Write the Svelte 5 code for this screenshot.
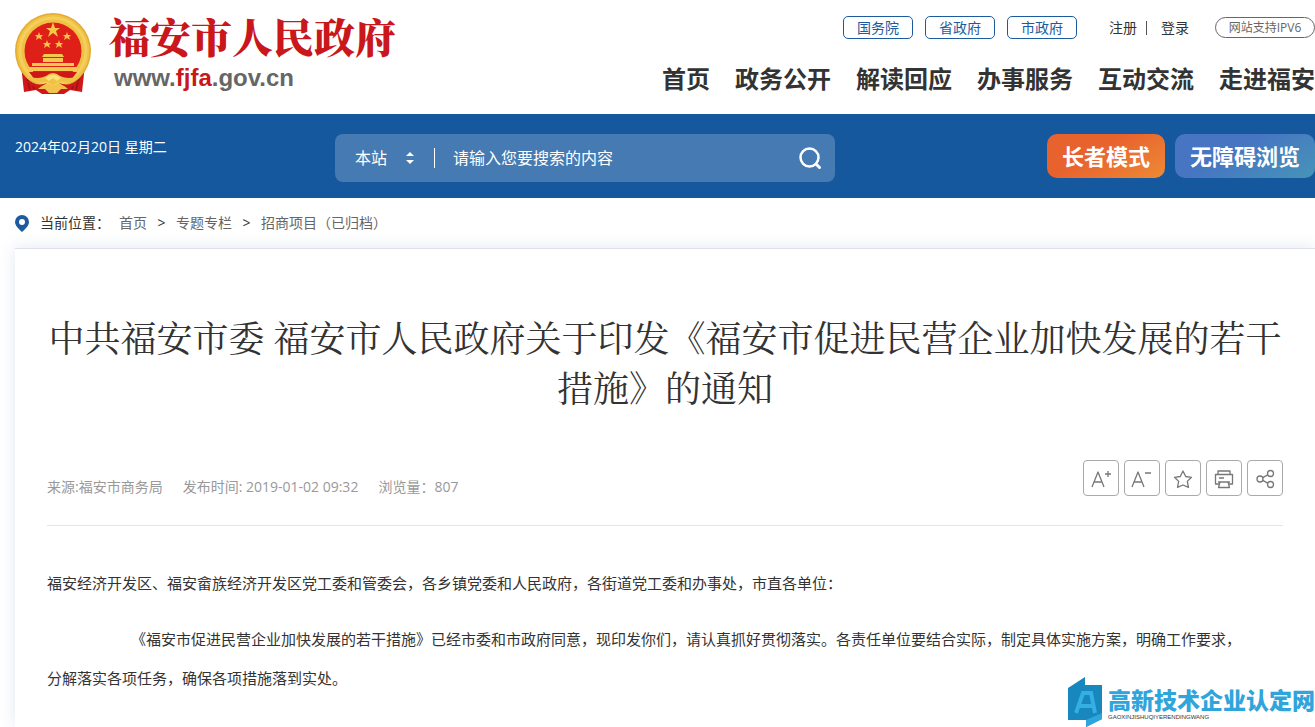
<script lang="ts">
  const portals = ['国务院', '省政府', '市政府'];
  const nav = ['首页', '政务公开', '解读回应', '办事服务', '互动交流', '走进福安'];
  const crumbs = ['首页', '专题专栏', '招商项目（已归档）'];

  let scope = '本站';
  let keyword = '';
</script>

<div class="page">
  <header>
    <a class="brand" href="#home">
      <svg class="emblem" viewBox="0 0 78 82" aria-hidden="true">
        <path d="M7 52 L71 52 L68 79 L56 77 L50 81 L28 81 L22 77 L10 79 Z" fill="#cf1719" />
        <path d="M12 61 L16 77 M66 61 L62 77 M17 66 L20 76 M61 66 L58 76" stroke="#9c1115" stroke-width="1.500" />
        <circle cx="39" cy="38" r="38" fill="#e2ab35" />
        <circle cx="39" cy="38" r="36.500" fill="#efc244" />
        <circle cx="39" cy="38" r="33" fill="none" stroke="#f5cf5c" stroke-width="3" />
        <circle cx="39" cy="38" r="28.500" fill="#df2018" />
        <path d="M39 9 L41 15 L46 15 L42 18 L44 24 L39 20 L34 24 L36 18 L32 15 L37 15 Z" fill="#f5c748" />
        <g fill="#f5c748">
          {#each [[25, 23], [53, 23], [33, 31], [45, 31]] as [x, y]}
            <path transform="translate({x} {y})" d="M0 -4 L1 -1 L4 -1 L2 1 L3 4 L0 2 L-3 4 L-2 1 L-4 -1 L-1 -1 Z" />
          {/each}
        </g>
        <path d="M30 41 H48 L50 44 H28 Z M29 45 H49 V49 H29 Z M18 50 H60 V53 H18 Z M15 54 H63 V58 H15 Z" fill="#f5c94f" />
        <path d="M15 59 H63 L57 67 H21 Z" fill="#cf1719" />
        <path d="M8 58 Q20 69 32 63 Q39 57 46 63 Q58 69 70 58 L64 66 Q55 72 46 68 L39 72 L32 68 Q23 72 14 66 Z" fill="#efc244" />
        <path d="M31 65 Q39 58 47 65 L43 68 L39 65 L35 68 Z" fill="#fae17b" />
        <path d="M12 67 Q24 74 33 70 L26 75 Q18 75 12 67 Z M66 67 Q54 74 45 70 L52 75 Q60 75 66 67 Z" fill="#cf1719" />
        <path d="M24 76 Q33 68 39 73 Q45 68 54 76 L47 76 L43 80 H35 L31 76 Z" fill="#f2c44b" />
      </svg>
      <span class="names">
        <strong>福安市人民政府</strong>
        <span class="domain">www.<em>fjfa</em>.gov.cn</span>
      </span>
    </a>

    <div class="head-right">
      <div class="quick">
        {#each portals as portal}
          <a class="portal" href="#portal">{portal}</a>
        {/each}
        <div class="account">
          <a href="#register">注册</a>
          <a href="#login">登录</a>
        </div>
        <span class="ipv6">网站支持IPV6</span>
      </div>
      <nav>
        {#each nav as item}
          <a href="#nav">{item}</a>
        {/each}
      </nav>
    </div>
  </header>

  <div class="banner">
    <time datetime="2024-02-20">2024年02月20日 星期二</time>
    <form class="search" onsubmit={(e) => e.preventDefault()}>
      <div class="scope">
        <select aria-label="搜索范围" bind:value={scope}>
          <option>本站</option>
          <option>全网</option>
        </select>
        <svg width="10" height="14" viewBox="0 0 10 14" aria-hidden="true">
          <path d="M5 1 L9 5 H1 Z M1 9 H9 L5 13 Z" fill="#fff" />
        </svg>
      </div>
      <input type="text" aria-label="搜索" placeholder="请输入您要搜索的内容" bind:value={keyword} />
      <button aria-label="搜索">
        <svg width="24" height="24" viewBox="0 0 24 24" fill="none" stroke="#fff" stroke-width="2.500" stroke-linecap="round">
          <circle cx="11.500" cy="11.500" r="9" />
          <path d="M18.500 18.500 L21.500 21.500" stroke-width="3" />
        </svg>
      </button>
    </form>
    <div class="modes">
      <button class="elder">长者模式</button>
      <button class="barrier">无障碍浏览</button>
    </div>
  </div>

  <div class="crumbs">
    <svg width="14" height="17" viewBox="0 0 14 17" aria-hidden="true">
      <path d="M7 0 A7 7 0 0 1 14 7 C14 11 9 15 7 17 C5 15 0 11 0 7 A7 7 0 0 1 7 0 Z M7 4 A3 3 0 0 0 7 10 A3 3 0 0 0 7 4 Z" fill="#1c5b9f" />
    </svg>
    <span class="here">当前位置：</span>
    {#each crumbs as crumb, i}
      {#if i > 0}<span class="sep">&gt;</span>{/if}
      <a href="#crumb">{crumb}</a>
    {/each}
  </div>

  <article>
    <h1>中共福安市委 福安市人民政府关于印发《福安市促进民营企业加快发展的若干措施》的通知</h1>

    <div class="info">
      <div class="meta">
        <span>来源:福安市商务局</span>
        <span>发布时间: 2019-01-02 09:32</span>
        <span>浏览量：807</span>
      </div>
      <div class="tools">
        <button aria-label="放大字体">
          <svg viewBox="0 0 36 36"><path d="M9 27 L15 12 L21 27 M11 22 H19 M22 14 H28 M25 11 V17" /></svg>
        </button>
        <button aria-label="缩小字体">
          <svg viewBox="0 0 36 36"><path d="M8 27 L14 12 L20 27 M10 22 H18 M21 13 H27" /></svg>
        </button>
        <button aria-label="收藏">
          <svg viewBox="0 0 36 36"><path d="M18 11 L20.700 16.500 L26.500 17.300 L22.300 21.400 L23.500 27.300 L18 25 L12.500 27.300 L13.700 21.400 L9.500 17.300 L15.300 16.500 Z" /></svg>
        </button>
        <button aria-label="打印">
          <svg viewBox="0 0 36 36"><path d="M12 14 V11 H24 V14 M13 24 H9.500 V14.500 H26.500 V24 H23 M13 18 H18 M12 22 H24 M14 22 L12.500 27.500 H23.500 L22 22" /></svg>
        </button>
        <button aria-label="分享">
          <svg viewBox="0 0 36 36"><circle cx="13" cy="19" r="3" /><circle cx="23.500" cy="13.500" r="3" /><circle cx="23.500" cy="24.500" r="3" /><path d="M15.700 17.600 L20.800 14.900 M15.700 20.400 L20.800 23.100" /></svg>
        </button>
      </div>
    </div>

    <div class="content">
      <p>福安经济开发区、福安畲族经济开发区党工委和管委会，各乡镇党委和人民政府，各街道党工委和办事处，市直各单位：</p>
      <p class="indent">《福安市促进民营企业加快发展的若干措施》已经市委和市政府同意，现印发你们，请认真抓好贯彻落实。各责任单位要结合实际，制定具体实施方案，明确工作要求，<br />分解落实各项任务，确保各项措施落到实处。</p>
    </div>
  </article>

  <a class="mark" href="#mark">
    <svg width="36" height="50" viewBox="0 0 36 50" aria-hidden="true">
      <path d="M0 11 L17 0 V8 H34 V42 L18 50 V43 H0 Z" fill="#1787bd" />
      <path d="M18 43 L34 36 V42 L18 50 Z" fill="#2fa5dc" />
      <path d="M8 36 L15 16 H23 L27 36 M12 29 H25" fill="none" stroke="#35aee2" stroke-width="4" />
    </svg>
    <span class="mark-text">
      <b>高新技术企业认定网</b>
      <small>GAOXINJISHUQIYERENDINGWANG</small>
    </span>
  </a>
</div>

<style>
  :global(body) {
    margin: 0;
  }

  .page {
    position: relative;
    display: flex;
    flex-direction: column;
    min-height: 100vh;
    overflow: hidden;
    background: #fff;
    color: #333;
    font-family: "Open Sans", "Noto Sans CJK SC", sans-serif;
    font-size: 14px;
    line-height: 20px;
  }

  .page * {
    box-sizing: border-box;
  }

  a {
    color: inherit;
    text-decoration: none;
  }

  button,
  input,
  select {
    padding: 0;
    border: 0;
    background: none;
    color: inherit;
    font: inherit;
  }

  header {
    display: flex;
    justify-content: space-between;
    height: 114px;
    padding-left: 14px;
  }

  .brand {
    display: flex;
    gap: 17px;
    padding-top: 13px;
  }

  .emblem {
    width: 78px;
    height: 82px;
  }

  .names {
    display: flex;
    flex-direction: column;
    white-space: nowrap;
  }

  .names strong {
    color: #c9171b;
    font-family: "Liberation Serif", "Noto Serif CJK SC", "Noto Sans CJK SC", serif;
    font-size: 41px;
    font-weight: 900;
    line-height: 52px;
  }

  .domain {
    padding-left: 5px;
    color: #666;
    font-family: "Liberation Sans", sans-serif;
    font-size: 24px;
    font-weight: 700;
    line-height: 26px;
  }

  .domain em {
    color: #c9171b;
    font-style: normal;
  }

  .head-right {
    display: flex;
    flex-direction: column;
    align-items: flex-end;
    gap: 20px;
    padding-top: 16px;
    white-space: nowrap;
  }

  .quick {
    display: flex;
    align-items: center;
    gap: 12px;
  }

  .portal {
    width: 70px;
    border: 1px solid #1c5b9f;
    border-radius: 5px;
    color: #1c5b9f;
    line-height: 21px;
    text-align: center;
  }

  .account {
    display: flex;
    margin: 0 14px 0 20px;
  }

  .account a {
    line-height: 14px;
  }

  .account a + a {
    margin-left: 9px;
    padding-left: 14px;
    border-left: 1px solid #555;
  }

  .ipv6 {
    width: 100px;
    border: 1px solid #666;
    border-radius: 11px;
    color: #666;
    font-size: 12px;
    line-height: 19px;
    text-align: center;
  }

  nav {
    display: flex;
    gap: 25px;
    font-size: 24px;
    font-weight: 700;
    line-height: 40px;
  }

  .banner {
    display: flex;
    height: 84px;
    padding: 20px 0 20px 15px;
    background: #16589e;
    color: #fff;
  }

  time {
    width: 320px;
    padding-top: 3px;
  }

  .search {
    display: flex;
    flex: 0 1 500px;
    align-items: center;
    height: 48px;
    padding: 0 13px 0 20px;
    border-radius: 8px;
    background: #467ab2;
    font-size: 16px;
  }

  .scope {
    display: flex;
    align-items: center;
    width: 80px;
    border-right: 1px solid #fff;
  }

  select {
    width: 50px;
    appearance: none;
  }

  option {
    color: #333;
  }

  input {
    flex: 1;
    min-width: 0;
    padding-left: 18px;
    outline: none;
  }

  input::placeholder {
    color: #fff;
    opacity: 1;
  }

  .search button {
    display: flex;
  }

  .modes {
    display: flex;
    gap: 10px;
    margin-left: auto;
  }

  .modes button {
    height: 44px;
    padding: 0 15px;
    border-radius: 10px;
    font-size: 22px;
    font-weight: 700;
    white-space: nowrap;
  }

  .elder {
    background: linear-gradient(150deg, #e8622e 40%, #ee8a35);
  }

  .barrier {
    background: linear-gradient(150deg, #4775c2 40%, #4595b8);
  }

  .crumbs {
    display: flex;
    align-items: center;
    height: 50px;
    padding-left: 15px;
    color: #666;
  }

  .here {
    margin: 0 9px 0 11px;
    color: #333;
  }

  .sep {
    width: 29px;
    color: #333;
    text-align: center;
  }

  article {
    flex: 1;
    margin-left: 15px;
    padding: 66px 32px 28px;
    border-top: 1px solid #dfe2ee;
    background: #fff;
    box-shadow: 0 0 15px rgba(40, 70, 150, .13);
  }

  h1 {
    margin: 0;
    font-family: "Liberation Serif", "Noto Serif CJK SC", "Noto Sans CJK SC", serif;
    font-size: 36px;
    font-weight: 400;
    line-height: 50px;
    text-align: center;
  }

  .info {
    display: flex;
    justify-content: space-between;
    margin-top: 45px;
    padding-bottom: 28px;
    border-bottom: 1px solid #e6e6e6;
  }

  .meta {
    display: flex;
    gap: 20px;
    padding-top: 17px;
    color: #999;
  }

  .tools {
    display: flex;
    gap: 5px;
  }

  .tools button {
    width: 36px;
    height: 36px;
    border: 1px solid #aaa;
    border-radius: 4px;
  }

  .tools svg {
    display: block;
    margin: -1px;
    fill: none;
    stroke: #777;
    stroke-width: 1.3;
    stroke-linejoin: round;
  }

  .content {
    padding-top: 38px;
    font-size: 15px;
    line-height: 39px;
  }

  p {
    margin: 0 0 17px;
  }

  p:last-child {
    margin: 0;
  }

  .indent {
    text-indent: 84px;
  }

  .mark {
    position: absolute;
    right: 0;
    bottom: 0;
    display: flex;
    gap: 4px;
    white-space: nowrap;
  }

  .mark-text {
    display: flex;
    flex-direction: column;
    padding-top: 12px;
  }

  .mark b {
    color: #2fa5dc;
    font-family: "Liberation Sans", "Noto Sans CJK SC", sans-serif;
    font-size: 23px;
    font-weight: 900;
    line-height: 24px;
  }

  .mark small {
    color: #333;
    font-family: "Liberation Sans", sans-serif;
    font-size: 6px;
    line-height: 8px;
  }
</style>
